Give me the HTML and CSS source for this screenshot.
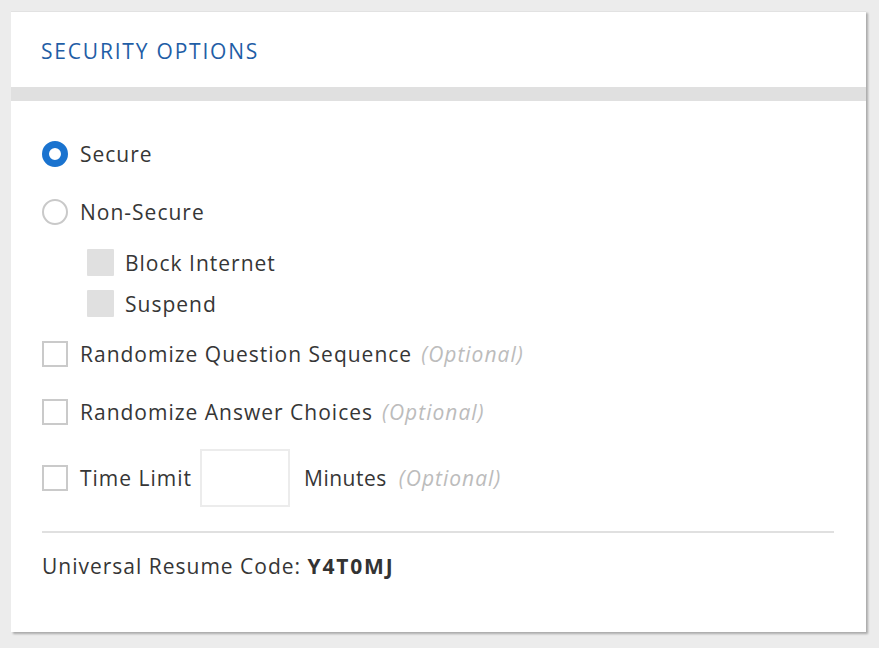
FILE: index.html
```html
<!DOCTYPE html>
<html>
<head>
<meta charset="utf-8">
<link rel="stylesheet" href="styles.css">
</head>
<body>
<div class="card">
  <div class="card-header">SECURITY OPTIONS</div>
  <div class="card-bar"></div>
  <div class="card-body">
    <div class="row row-secure">
      <span class="radio radio-on"></span><span class="label">Secure</span>
    </div>
    <div class="row row-nonsecure">
      <span class="radio"></span><span class="label">Non-Secure</span>
    </div>
    <div class="row row-sub row-block">
      <span class="subbox"></span><span class="label">Block Internet</span>
    </div>
    <div class="row row-sub row-suspend">
      <span class="subbox"></span><span class="label">Suspend</span>
    </div>
    <div class="row row-rqs">
      <span class="check"></span><span class="label">Randomize Question Sequence</span><span class="opt">(Optional)</span>
    </div>
    <div class="row row-rac">
      <span class="check"></span><span class="label">Randomize Answer Choices</span><span class="opt">(Optional)</span>
    </div>
    <div class="row row-time">
      <span class="check"></span><span class="label">Time Limit</span><span class="timebox"></span><span class="label minutes">Minutes</span><span class="opt opt-time">(Optional)</span>
    </div>
    <div class="divider"></div>
    <div class="resume">Universal Resume Code: <b>Y4T0MJ</b></div>
  </div>
</div>
</body>
</html>
```

FILE: styles.css
```css
html, body {
  margin: 0;
  padding: 0;
  background: #ececec;
}
body {
  font-family: "Open Sans", Lato, sans-serif;
  color: #363636;
  padding: 11px 13px 16px 11px;
}
.card {
  width: 855px;
  height: 621px;
  background: #fff;
  box-shadow: 2px 2px 2px rgba(0,0,0,0.28);
  border-top: 1px solid #e2e2e2;
  box-sizing: border-box;
  display: flex;
  flex-direction: column;
}
.card-header {
  height: 75px;
  display: flex;
  align-items: center;
  padding-left: 30px;
  font-size: 21px;
  letter-spacing: 1.8px;
  color: #1f5ea6;
  padding-top: 3px;
  box-sizing: border-box;
}
.card-bar {
  height: 14px;
  background: #e0e0e0;
}
.card-body {
  padding: 40px 32px 0 31px;
  display: flex;
  flex-direction: column;
}
.row {
  display: flex;
  align-items: center;
  font-size: 21px;
  letter-spacing: 1px;
}
.label { color: #363636; }
.radio {
  width: 26px;
  height: 26px;
  border-radius: 50%;
  border: 2px solid #c9c9c9;
  box-sizing: border-box;
  margin-right: 12px;
  flex: none;
}
.radio-on {
  border: 7px solid #1a73cf;
  background: #fff;
}
.row-secure { height: 26px; }
.row-nonsecure { height: 26px; margin-top: 32px; }
.row-sub { padding-left: 45px; height: 27px; }
.row-block { margin-top: 24px; }
.row-suspend { margin-top: 14px; }
.subbox {
  width: 27px;
  height: 27px;
  background: #e0e0e0;
  border-radius: 1px;
  margin-right: 11px;
  flex: none;
}
.check {
  width: 26px;
  height: 26px;
  border: 2px solid #cacaca;
  box-sizing: border-box;
  margin-right: 12px;
  flex: none;
}
.row-rqs { height: 26px; margin-top: 24px; }
.row-rac { height: 26px; margin-top: 32px; }
.row-time { height: 58px; margin-top: 24px; }
.opt {
  color: #bcbcbc;
  font-style: italic;
  margin-left: 9px;
}
.timebox {
  width: 90px;
  height: 58px;
  border: 2px solid #ececec;
  box-sizing: border-box;
  margin-left: 8px;
  margin-right: 14px;
  flex: none;
}
.minutes { letter-spacing: 0.5px; }
.opt-time { margin-left: 12px; }
.divider {
  height: 2px;
  background: #e0e0e0;
  margin-top: 24px;
}
.resume {
  margin-top: 21px;
  font-size: 21px;
  letter-spacing: 1px;
  line-height: 24px;
}
.resume b { font-weight: 700; color: #333; letter-spacing: 1.8px; }
```
